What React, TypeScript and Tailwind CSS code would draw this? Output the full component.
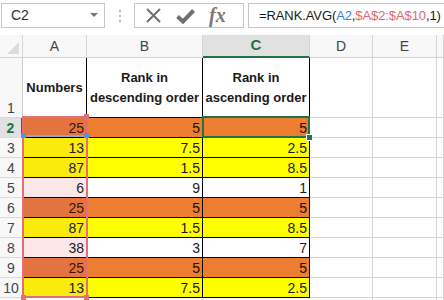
import React from "react";

type Fill = "o" | "y" | "p" | "w";

const rows: { a: string; b: string; c: string; fa: Fill; fbc: Fill }[] = [
  { a: "25", b: "5", c: "5", fa: "o", fbc: "o" },
  { a: "13", b: "7.5", c: "2.5", fa: "y", fbc: "y" },
  { a: "87", b: "1.5", c: "8.5", fa: "y", fbc: "y" },
  { a: "6", b: "9", c: "1", fa: "p", fbc: "w" },
  { a: "25", b: "5", c: "5", fa: "o", fbc: "o" },
  { a: "87", b: "1.5", c: "8.5", fa: "y", fbc: "y" },
  { a: "38", b: "3", c: "7", fa: "p", fbc: "w" },
  { a: "25", b: "5", c: "5", fa: "o", fbc: "o" },
  { a: "13", b: "7.5", c: "2.5", fa: "y", fbc: "y" },
];

const aFill: Record<Fill, string> = {
  o: "bg-[#e4743f] text-[#3a1508]",
  y: "bg-[#fbeb0c] text-[#222]",
  p: "bg-[#fbe7e8] text-[#222]",
  w: "bg-white text-[#222]",
};
const bcFill: Record<Fill, string> = {
  o: "bg-[#ed7d31] text-[#1c0c04]",
  y: "bg-[#ffff00] text-[#1a1a1a]",
  p: "bg-[#fbe7e8] text-[#1a1a1a]",
  w: "bg-white text-[#1a1a1a]",
};

function RowHead({ n, sel }: { n?: number; sel?: boolean }) {
  return (
    <div
      className={
        "flex items-end justify-center leading-[17px] text-[14px] border-b border-b-[#dadada] " +
        (sel
          ? "bg-[#e1e1e1] text-[#217346] font-bold border-r-2 border-r-[#217346]"
          : "bg-[#f8f8f8] text-[#444] border-r border-r-[#c8ccd4]")
      }
    >
      {n}
    </div>
  );
}

function Num({ v, cls }: { v: string; cls: string }) {
  return (
    <div className={"flex items-end justify-end pr-[2px] leading-[17px] text-[14px] border-r border-b border-black " + cls}>
      {v}
    </div>
  );
}

function Grid() {
  return <div className="border-r border-b border-[#d4d4d4]" />;
}

export default function App() {
  return (
    <div className="w-[444px] h-[300px] overflow-hidden bg-white font-['Liberation_Sans',Arial,sans-serif] text-[#222]">
      {/* formula bar */}
      <div className="h-[35px] flex items-start pt-[3px] pl-[1px]">
        <div className="w-[104px] h-[25px] border border-[#c6c6c6] flex items-center justify-between pl-[9px] pr-[6px] text-[14px] text-[#333]">
          <span>C2</span>
          <svg width="8" height="5" viewBox="0 0 8 5">
            <path d="M0 0 L8 0 L4 4 Z" fill="#777" />
          </svg>
        </div>
        <div className="w-[29px] h-[25px] flex flex-col items-center justify-center gap-[3px]">
          <div className="w-[2px] h-[2px] bg-[#bbb]" />
          <div className="w-[2px] h-[2px] bg-[#bbb]" />
          <div className="w-[2px] h-[2px] bg-[#bbb]" />
        </div>
        <div className="w-[110px] h-[25px] border border-[#c6c6c6] flex items-center pl-[10px] gap-[14px]">
          <svg width="17" height="17" viewBox="0 0 17 17">
            <path d="M2 2 L15 15 M15 2 L2 15" stroke="#707070" strokeWidth="2" />
          </svg>
          <svg width="19" height="16" viewBox="0 0 19 16">
            <path d="M1.5 8.5 L7 13.5 L17.5 2.5" stroke="#707070" strokeWidth="4" fill="none" />
          </svg>
          <span className="font-['Liberation_Serif',serif] italic font-bold text-[20px] leading-none text-[#7a7a7a] -mt-[2px]">
            fx
          </span>
        </div>
        <div className="flex-1 ml-[4px] h-[25px] border border-r-0 border-[#c6c6c6] flex items-center pl-[10px] text-[13px] tracking-[-0.1px] whitespace-nowrap overflow-hidden">
          <span className="text-[#1a1a1a]">=RANK.AVG(</span>
          <span className="text-[#3e7bd8]">A2</span>
          <span className="text-[#1a1a1a]">,</span>
          <span className="text-[#e0666f]">$A$2:$A$10</span>
          <span className="text-[#1a1a1a]">,1)</span>
        </div>
      </div>

      {/* sheet */}
      <div className="relative">
        <div className="grid grid-cols-[23px_64px_116px_107px_63px_64px_1fr] grid-rows-[23px_60px_repeat(10,20px)]">
          {/* header row */}
          <div className="relative bg-[#f8f8f8] border-r border-b border-[#d4d4d4]">
            <svg className="absolute right-[3px] bottom-[3px]" width="12" height="12" viewBox="0 0 12 12">
              <path d="M12 0 L12 12 L0 12 Z" fill="#dcdcdc" />
            </svg>
          </div>
          {["A", "B"].map((l) => (
            <div key={l} className="flex items-center justify-center bg-[#f8f8f8] border-r border-b border-[#d4d4d4] text-[14px] text-[#444]">
              {l}
            </div>
          ))}
          <div className="flex items-center justify-center bg-[#e1e1e1] border-r border-r-[#d4d4d4] border-b-2 border-b-[#217346] text-[15px] font-bold text-[#217346]">
            C
          </div>
          {["D", "E", ""].map((l, i) => (
            <div key={i} className="flex items-center justify-center bg-[#f8f8f8] border-r border-b border-[#d4d4d4] text-[14px] text-[#444]">
              {l}
            </div>
          ))}

          {/* row 1 */}
          <div className="flex items-end justify-center pb-[0px] leading-[17px] text-[14px] text-[#444] bg-[#f8f8f8] border-r border-r-[#c8ccd4] border-b border-b-[#dadada]">
            1
          </div>
          <div className="flex items-center justify-center text-center font-bold text-[13px] leading-[20px] border-r border-b border-black text-[#1a1a1a]">
            Numbers
          </div>
          <div className="flex items-center justify-center text-center font-bold text-[13px] leading-[20px] border-r border-b border-black text-[#1a1a1a]">
            Rank in
            <br />
            descending order
          </div>
          <div className="flex items-center justify-center text-center font-bold text-[13px] leading-[20px] border-r border-b border-black text-[#1a1a1a] whitespace-nowrap">
            Rank in
            <br />
            ascending order
          </div>
          <Grid />
          <Grid />
          <Grid />

          {rows.map((r, i) => (
            <React.Fragment key={i}>
              <RowHead n={i + 2} sel={i === 0} />
              <Num v={r.a} cls={aFill[r.fa]} />
              <Num v={r.b} cls={bcFill[r.fbc]} />
              <Num v={r.c} cls={bcFill[r.fbc]} />
              <Grid />
              <Grid />
              <Grid />
            </React.Fragment>
          ))}

          <RowHead />
          <Grid />
          <Grid />
          <Grid />
          <Grid />
          <Grid />
          <Grid />
        </div>

        {/* range highlight A2:A10 */}
        <div className="absolute left-[22px] top-[81px] w-[66px] h-[182px] border-2 border-[#e36f78]" />
        {/* A2 reference */}
        <div className="absolute left-[23px] top-[100px] w-[64px] h-[2px] bg-[#8aa6d8]" />
        <div className="absolute left-[84px] top-[79px] w-[5px] h-[5px] bg-[#e36f78]" />
        <div className="absolute left-[21px] top-[98px] w-[5px] h-[5px] bg-[#5b8fe0]" />
        <div className="absolute left-[84px] top-[98px] w-[5px] h-[5px] bg-[#5b8fe0]" />
        <div className="absolute left-[21px] top-[260px] w-[5px] h-[5px] bg-[#e36f78]" />
        <div className="absolute left-[84px] top-[260px] w-[5px] h-[5px] bg-[#e36f78]" />

        {/* active cell C2 */}
        <div className="absolute left-[202px] top-[81px] w-[108px] h-[22px] border-2 border-[#217346]" />
        <div className="absolute left-[306px] top-[99px] w-[7px] h-[7px] bg-[#217346] border border-white" />
      </div>
    </div>
  );
}
